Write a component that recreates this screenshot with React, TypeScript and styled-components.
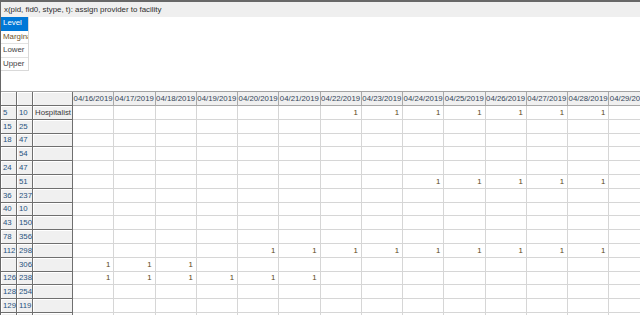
import React from "react";
import styled, { createGlobalStyle } from "styled-components";

const GlobalStyle = createGlobalStyle`
  html, body {
    margin: 0;
    padding: 0;
    background: #ffffff;
    overflow: hidden;
  }
  body {
    font-family: "Liberation Sans", Arial, sans-serif;
  }
`;

const Frame = styled.div`
  width: 640px;
  height: 315px;
  box-sizing: border-box;
  border-top: 2px solid #676767;
  border-left: 1px solid #676767;
  overflow: hidden;
  display: flex;
  flex-direction: column;
  & > * {
    flex: none;
  }
`;

const TitleBar = styled.div`
  height: 15px;
  background: #efefef;
  color: #2e2e2e;
  font-size: 7.9px;
  line-height: 15px;
  padding-left: 3px;
  white-space: nowrap;
`;

const LevelList = styled.ul`
  list-style: none;
  margin: 0;
  padding: 0;
  width: 27px;
  border-right: 1px solid #d9d9d9;
  border-bottom: 1px solid #d9d9d9;
`;

const LevelItem = styled.li<{ $selected?: boolean; $tone?: string }>`
  height: 12.5px;
  line-height: 12.5px;
  font-size: 7.9px;
  padding-left: 2px;
  overflow: hidden;
  white-space: nowrap;
  border-bottom: 1px solid ${(p) => (p.$selected ? "#0078d7" : "#e2e2e2")};
  background: ${(p) => (p.$selected ? "#0078d7" : "#ffffff")};
  color: ${(p) => (p.$selected ? "#ffffff" : p.$tone || "#444444")};
  &:last-child {
    border-bottom: none;
  }
`;

const Spacer = styled.div`
  height: 20px;
`;

const Grid = styled.div`
  display: grid;
  grid-template-columns: 16px 16px 40px repeat(14, 41.25px);
  grid-template-rows: 14px;
  grid-auto-rows: 13.8px;
  border-top: 1px solid #a3a3a3;
  font-size: 7.8px;
`;

type Kind = "corner" | "col" | "row" | "data";

const Cell = styled.div<{ $kind: Kind }>`
  box-sizing: border-box;
  overflow: hidden;
  white-space: nowrap;
  display: flex;
  align-items: center;
  padding: 0 2px;
  background: ${(p) => (p.$kind === "data" ? "#ffffff" : "#f0f0f0")};
  border-right: 1px solid
    ${(p) => (p.$kind === "data" ? "#d6d6d6" : p.$kind === "col" ? "#a9a9a9" : "#6f6f6f")};
  border-bottom: 1px solid
    ${(p) => (p.$kind === "data" ? "#d6d6d6" : p.$kind === "col" ? "#a9a9a9" : "#6f6f6f")};
  box-shadow: ${(p) => (p.$kind === "row" || p.$kind === "corner" ? "inset 1px 1px 0 #ffffff" : "none")};
  justify-content: ${(p) => (p.$kind === "data" ? "flex-end" : p.$kind === "col" ? "center" : "flex-start")};
  color: ${(p) =>
    p.$kind === "data" ? "#5a4620" : p.$kind === "col" ? "#36475a" : "#28527f"};
  padding-right: ${(p) => (p.$kind === "data" ? "3px" : "2px")};
`;

const dates = [
  "04/16/2019",
  "04/17/2019",
  "04/18/2019",
  "04/19/2019",
  "04/20/2019",
  "04/21/2019",
  "04/22/2019",
  "04/23/2019",
  "04/24/2019",
  "04/25/2019",
  "04/26/2019",
  "04/27/2019",
  "04/28/2019",
  "04/29/2019",
];

interface IRow {
  pid: string;
  fid: string;
  stype: string;
  from?: number;
  to?: number;
}

const rows: IRow[] = [
  { pid: "5", fid: "10", stype: "Hospitalist", from: 6, to: 12 },
  { pid: "15", fid: "25", stype: "" },
  { pid: "18", fid: "47", stype: "" },
  { pid: "", fid: "54", stype: "" },
  { pid: "24", fid: "47", stype: "" },
  { pid: "", fid: "51", stype: "", from: 8, to: 12 },
  { pid: "36", fid: "237", stype: "" },
  { pid: "40", fid: "10", stype: "" },
  { pid: "43", fid: "150", stype: "" },
  { pid: "78", fid: "356", stype: "" },
  { pid: "112", fid: "298", stype: "", from: 4, to: 12 },
  { pid: "", fid: "306", stype: "", from: 0, to: 2 },
  { pid: "126", fid: "238", stype: "", from: 0, to: 5 },
  { pid: "128", fid: "254", stype: "" },
  { pid: "129", fid: "119", stype: "" },
  { pid: "151", fid: "7", stype: "" },
];

export default function App() {
  return (
    <>
      <GlobalStyle />
      <Frame>
        <TitleBar>x(pid, fid0, stype, t): assign provider to facility</TitleBar>
        <LevelList>
          <LevelItem $selected>Level</LevelItem>
          <LevelItem $tone="#6e5228">Marginal</LevelItem>
          <LevelItem>Lower</LevelItem>
          <LevelItem>Upper</LevelItem>
        </LevelList>
        <Spacer />
        <Grid>
          <Cell $kind="corner" />
          <Cell $kind="corner" />
          <Cell $kind="corner" />
          {dates.map((d) => (
            <Cell key={d} $kind="col">
              {d}
            </Cell>
          ))}
          {rows.map((r, i) => (
            <React.Fragment key={i}>
              <Cell $kind="row">{r.pid}</Cell>
              <Cell $kind="row">{r.fid}</Cell>
              <Cell $kind="row" style={{ color: "#3a3a3a" }}>
                {r.stype}
              </Cell>
              {dates.map((d, j) => (
                <Cell key={d} $kind="data">
                  {r.from !== undefined && r.to !== undefined && j >= r.from && j <= r.to ? "1" : ""}
                </Cell>
              ))}
            </React.Fragment>
          ))}
        </Grid>
      </Frame>
    </>
  );
}
